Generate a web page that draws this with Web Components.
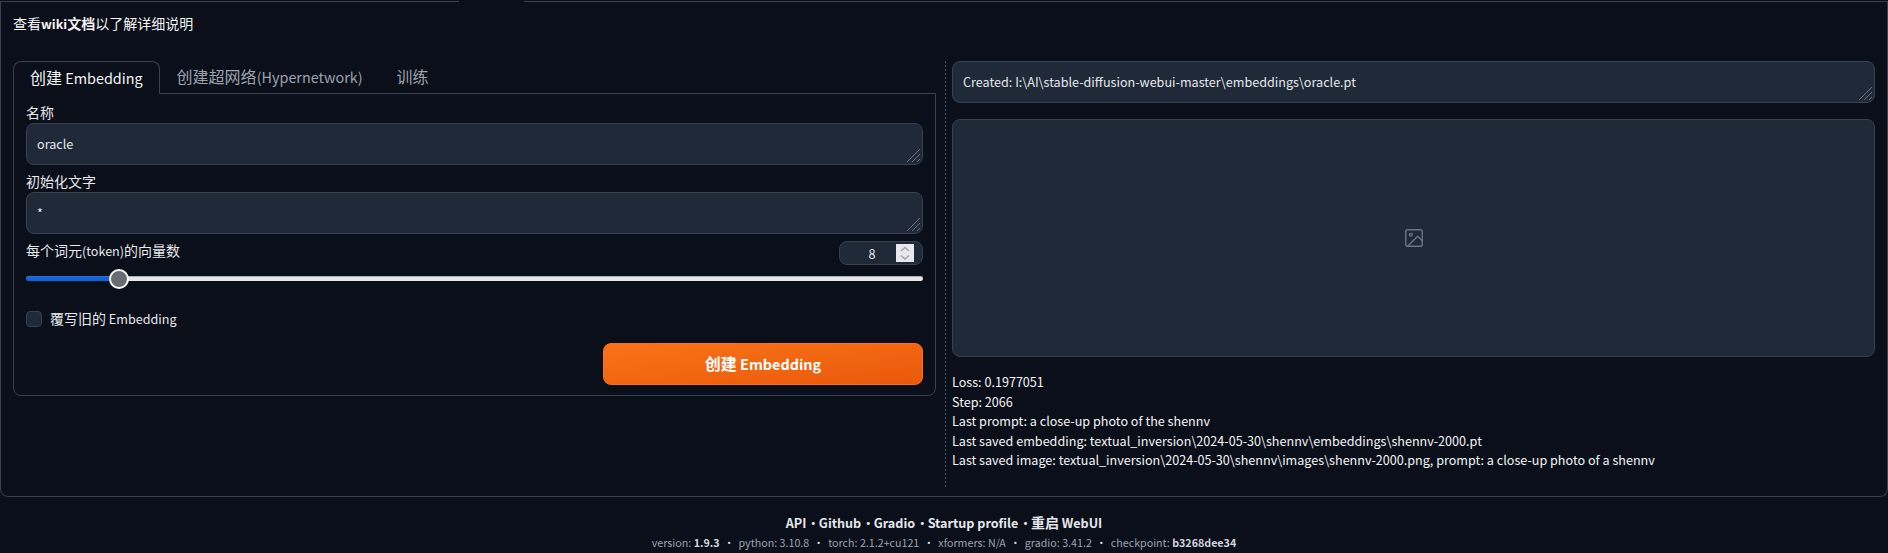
<!DOCTYPE html>
<html lang="zh">
<head>
<meta charset="utf-8">
<title>Train</title>
<style>
    html, body {
        margin: 0;
        background: #0b0f19;
        color: #f3f4f6;
        font: 14px/20px "Noto Sans CJK SC", "Noto Sans", sans-serif;
        height: 553px;
        overflow: hidden;
    }
</style>
</head>
<body>
<sd-app>
    <sd-tabs slot="left">
        <sd-textbox label="名称" value="oracle"></sd-textbox>
        <sd-textbox label="初始化文字" value="*"></sd-textbox>
        <sd-slider label="每个词元(token)的向量数" value="8" percent="10.4"></sd-slider>
        <sd-checkbox label="覆写旧的 Embedding"></sd-checkbox>
        <sd-button label="创建 Embedding"></sd-button>
    </sd-tabs>
    <sd-textbox slot="right" value="Created: I:\AI\stable-diffusion-webui-master\embeddings\oracle.pt"></sd-textbox>
    <sd-imagebox slot="right"></sd-imagebox>
    <sd-progress slot="right"></sd-progress>
</sd-app>
<sd-footer></sd-footer>

<script>
const GRIP = `<svg class="grip" width="15" height="15" viewBox="0 0 15 15" fill="none" stroke="#6b7280" stroke-width="1">
    <path d="M1 14L14 1M6 14L14 6M11 14L14 11"/></svg>`

// the latin of the cjk font runs about 10% bigger than the reference's, so shrink those runs
const LATIN_CSS = `.l { font-size: .9em; }`
const lat = (text) => text.replace(/[\x20-\x7e]+/g, m => `<span class="l">${m}</span>`)

class SdApp extends HTMLElement {
    constructor() {
        super()
        let shadow = this.attachShadow({ mode: 'open' })
        shadow.innerHTML = `<style>
            ${LATIN_CSS}
            :host { display: block; padding-top: 1px; }
            .edge { display: flex; height: 1px; }
            .edge i { background: #374151; }
            .edge i:first-child { width: 459px; }
            .edge i:last-child { flex: 1; margin-left: 65px; }
            .panel {
                height: 495px;
                box-sizing: border-box;
                border: 1px solid #374151;
                border-top: 0;
                border-radius: 0 0 8px 8px;
                padding: 11px 11px 9px 12px;
            }
            .wiki { height: 21px; line-height: 21px; margin-bottom: 27px; }
            .wiki b { font-weight: 700; }
            .cols { display: grid; grid-template-columns: 923px 16px 923px; height: 426px; }
            .rule {
                margin-left: 9px;
                width: 1px;
                background: repeating-linear-gradient(180deg, #4b5563 0 2px, transparent 2px 4px);
            }
            .right { display: flex; flex-direction: column; gap: 16px; }
        </style>
        <div class="edge"><i></i><i></i></div>
        <div class="panel">
            <div class="wiki">查看<b>${lat('wiki')}文档</b>以了解详细说明</div>
            <div class="cols">
                <div><slot name="left"></slot></div>
                <div class="rule"></div>
                <div class="right"><slot name="right"></slot></div>
            </div>
        </div>`
    }
}
customElements.define('sd-app', SdApp)

class SdTabs extends HTMLElement {
    constructor() {
        super()
        let shadow = this.attachShadow({ mode: 'open' })
        shadow.innerHTML = `<style>
            ${LATIN_CSS}
            :host { display: block; }
            .bar { display: flex; height: 33px; font-size: 16px; line-height: 30px; }
            .tab { padding: 0 17px; color: #9ca3af; white-space: nowrap; }
            .tab.on {
                color: #f3f4f6;
                border: 1px solid #374151;
                border-bottom: 0;
                border-radius: 8px 8px 0 0;
                padding: 0 16px;
                background: #0b0f19;
                position: relative;
                z-index: 1;
                height: 33px;
                box-sizing: border-box;
            }
            .body {
                margin-top: -1px;
                border: 1px solid #374151;
                border-radius: 0 0 8px 8px;
                padding: 9px 12px 10px;
                display: flex;
                flex-direction: column;
                height: 303px;
                box-sizing: border-box;
            }
        </style>
        <div class="bar">
            <div class="tab on">${lat('创建 Embedding')}</div>
            <div class="tab">${lat('创建超网络(Hypernetwork)')}</div>
            <div class="tab">训练</div>
        </div>
        <div class="body"><slot></slot></div>`
    }
}
customElements.define('sd-tabs', SdTabs)

class SdTextbox extends HTMLElement {
    constructor() {
        super()
        let shadow = this.attachShadow({ mode: 'open' })
        const label = this.getAttribute('label')
        shadow.innerHTML = `<style>
            ${LATIN_CSS}
            :host { display: block; margin-bottom: 7px; }
            :host([slot]) { margin-bottom: 0; }
            .label { height: 20px; line-height: 18px; color: #e5e7eb; }
            .box {
                position: relative;
                height: 42px;
                box-sizing: border-box;
                background: #1f2937;
                border: 1px solid #374151;
                border-radius: 8px;
                padding: 9px 10px;
                line-height: 20px;
                color: #e5e7eb;
            }
            .grip { position: absolute; right: 1px; bottom: 1px; }
        </style>
        ${label ? `<div class="label">${label}</div>` : ''}
        <div class="box">${lat(this.getAttribute('value'))}${GRIP}</div>`
    }
}
customElements.define('sd-textbox', SdTextbox)

class SdSlider extends HTMLElement {
    constructor() {
        super()
        let shadow = this.attachShadow({ mode: 'open' })
        const pct = this.getAttribute('percent')
        shadow.innerHTML = `<style>
            ${LATIN_CSS}
            :host { display: block; }
            .head { display: flex; justify-content: space-between; align-items: flex-start; height: 24px; color: #e5e7eb; }
            .head > div:first-child { line-height: 18px; }
            .num {
                width: 84px;
                height: 24px;
                box-sizing: border-box;
                display: flex;
                align-items: center;
                background: #1f2937;
                border: 1px solid #374151;
                border-radius: 8px;
                padding-right: 8px;
            }
            .num span { flex: 1; text-align: center; padding-left: 8px; }
            .num .l { padding: 0; }
            .spin { width: 18px; height: 18px; background: #e8e8ee; display: block; }
            .track {
                position: relative;
                margin-top: 11px;
                height: 5px;
                border-radius: 3px;
                background: linear-gradient(90deg, #0b63e5 ${pct}%, #e5e5ea ${pct}%);
                box-shadow: inset 0 1px 0 rgba(120, 120, 130, .5);
            }
            .thumb {
                position: absolute;
                left: ${pct}%;
                top: 50%;
                width: 20px;
                height: 20px;
                box-sizing: border-box;
                transform: translate(-50%, -50%);
                border: 2px solid #fff;
                border-radius: 50%;
                background: #6b6b76;
            }
        </style>
        <div class="head">
            <div>${lat(this.getAttribute('label'))}</div>
            <div class="num"><span>${lat(this.getAttribute('value'))}</span>
                <svg class="spin" viewBox="0 0 18 18" fill="none" stroke="#a2a2aa" stroke-width="1.4">
                    <path d="M5 7l4-3.5L13 7M5 11.5l4 3.5 4-3.5"/>
                </svg>
            </div>
        </div>
        <div class="track"><div class="thumb"></div></div>`
    }
}
customElements.define('sd-slider', SdSlider)

class SdCheckbox extends HTMLElement {
    constructor() {
        super()
        let shadow = this.attachShadow({ mode: 'open' })
        shadow.innerHTML = `<style>
            ${LATIN_CSS}
            :host { display: flex; align-items: center; gap: 8px; margin-top: 30px; height: 16px; color: #e5e7eb; }
            .mark {
                width: 16px;
                height: 16px;
                box-sizing: border-box;
                background: #1f2937;
                border: 1px solid #374151;
                border-radius: 4px;
            }
            .text { padding-bottom: 2px; }
        </style>
        <div class="mark"></div><div class="text">${lat(this.getAttribute('label'))}</div>`
    }
}
customElements.define('sd-checkbox', SdCheckbox)

class SdButton extends HTMLElement {
    constructor() {
        super()
        let shadow = this.attachShadow({ mode: 'open' })
        shadow.innerHTML = `<style>
            ${LATIN_CSS}
            :host { display: block; margin: 16px 0 0 auto; width: 320px; }
            .btn {
                height: 42px;
                box-sizing: border-box;
                display: flex;
                align-items: center;
                justify-content: center;
                padding-bottom: 2px;
                border: 1px solid #f97316;
                border-radius: 8px;
                background: linear-gradient(to bottom right, #f97316, #ea580c);
                color: #fff;
                font-size: 16px;
                font-weight: 600;
            }
        </style>
        <div class="btn"><div>${lat(this.getAttribute('label'))}</div></div>`
    }
}
customElements.define('sd-button', SdButton)

class SdImagebox extends HTMLElement {
    constructor() {
        super()
        let shadow = this.attachShadow({ mode: 'open' })
        shadow.innerHTML = `<style>
            :host {
                display: flex;
                align-items: center;
                justify-content: center;
                height: 238px;
                box-sizing: border-box;
                background: #1f2937;
                border: 1px solid #374151;
                border-radius: 8px;
            }
        </style>
        <svg width="22" height="22" viewBox="0 0 24 24" fill="none" stroke="#6b7280" stroke-width="1.5" stroke-linecap="round" stroke-linejoin="round">
            <rect x="3" y="3" width="18" height="18" rx="2"/>
            <circle cx="8.5" cy="8.5" r="1.5"/>
            <path d="M21 15l-5-5L5 21"/>
        </svg>`
    }
}
customElements.define('sd-imagebox', SdImagebox)

class SdProgress extends HTMLElement {
    constructor() {
        super()
        let shadow = this.attachShadow({ mode: 'open' })
        const lines = [
            'Loss: 0.1977051',
            'Step: 2066',
            'Last prompt: a close-up photo of the shennv',
            'Last saved embedding: textual_inversion\\2024-05-30\\shennv\\embeddings\\shennv-2000.pt',
            'Last saved image: textual_inversion\\2024-05-30\\shennv\\images\\shennv-2000.png, prompt: a close-up photo of a shennv',
        ]
        shadow.innerHTML = `<style>
            ${LATIN_CSS}
            :host { display: block; line-height: 19.6px; margin-top: -1px; }
        </style>
        ${lines.map(l => `<div>${lat(l)}</div>`).join('')}`
    }
}
customElements.define('sd-progress', SdProgress)

class SdFooter extends HTMLElement {
    constructor() {
        super()
        let shadow = this.attachShadow({ mode: 'open' })
        const vers = [
            ['version: ', '1.9.3'], ['python: ', '3.10.8'], ['torch: ', '2.1.2+cu121'],
            ['xformers: ', 'N/A'], ['gradio: ', '3.41.2'], ['checkpoint: ', 'b3268dee34'],
        ]
        const info = vers.map(v => v[1].match(/^(1\.9|b3)/)
            ? `<span>${v[0]}<b>${v[1]}</b></span>` : `<span>${v[0]}${v[1]}</span>`)
        shadow.innerHTML = `<style>
            ${LATIN_CSS}
            :host { display: block; text-align: center; padding-top: 15px; }
            .links { font-weight: 600; line-height: 20px; color: #e5e7eb; }
            .links i { display: inline-block; width: 12.5px; font-style: normal; font-weight: 400; }
            .vers { font-size: 10.7px; line-height: 18px; margin-top: 1px; color: #9ca3af; }
            .vers b { color: #d1d5db; font-weight: 600; }
            .vers i { display: inline-block; width: 19px; font-style: normal; color: #d1d5db; }
        </style>
        <div class="links">${lat('API')}<i>·</i>${lat('Github')}<i>·</i>${lat('Gradio')}<i>·</i>${lat('Startup profile')}<i>·</i>${lat('重启 WebUI')}</div>
        <div class="vers">${info.join('<i>•</i>')}</div>`
    }
}
customElements.define('sd-footer', SdFooter)
</script>
</body>
</html>
